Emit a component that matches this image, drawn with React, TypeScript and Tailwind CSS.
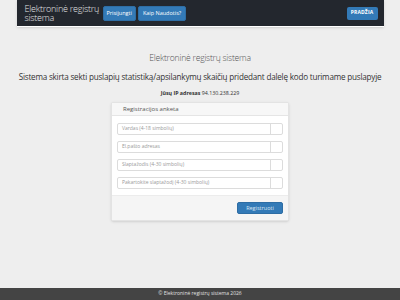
const fields = [
  "Vardas (4-18 simbolių)",
  "El.pašto adresas",
  "Slaptažodis (4-30 simbolių)",
  "Pakartokite slaptažodį (4-30 simbolių)",
];

const Navbar = () => {
  return (
    <header className="mx-auto w-[367px] h-[27px] bg-[#23272e] border-b border-white flex items-center pl-[8px] pr-[6px] shadow-sm">
      <div className="w-[77px] text-[9px] leading-[9px] text-[#e6e6e6] font-light tracking-tight">
        Elektroninė registrų sistema
      </div>
      <nav className="flex items-center gap-[2px] ml-[1px]">
        <button className="h-[15px] px-[3px] bg-[#337ab7] border border-[#2e6da4] rounded-[2px] text-[5.5px] text-white">
          Prisijungti
        </button>
        <button className="h-[15px] px-[4px] bg-[#337ab7] border border-[#2e6da4] rounded-[2px] text-[5.5px] text-white">
          Kaip Naudotis?
        </button>
      </nav>
      <button className="ml-auto h-[13px] w-[31px] bg-[#337ab7] rounded-[2px] text-[5px] font-bold text-white tracking-wide">
        PRADŽIA
      </button>
    </header>
  );
};

const App = () => {
  return (
    <div
      className="min-h-[300px] h-[300px] flex flex-col bg-[#eeeeee] text-[#333]"
      style={{ fontFamily: '"Open Sans", "Liberation Sans", sans-serif' }}
    >
      <Navbar />
      <main className="flex flex-col items-center">
        <h1 className="mt-[24px] text-[8.6px] leading-[14px] font-light text-[#555] tracking-tight whitespace-nowrap">
          Elektroninė registrų sistema
        </h1>
        <h2 className="mt-[5px] text-[8.1px] leading-[14px] text-[#333] tracking-tight whitespace-nowrap">
          Sistema skirta sekti puslapių statistiką/apsilankymų skaičių pridedant dalelę kodo turimame puslapyje
        </h2>
        <p className="mt-[5px] text-[5.3px] leading-[8px] text-[#333]">
          <span className="font-bold">Jūsų IP adresas</span> 94.130.238.229
        </p>
        <div className="mt-[5px] w-[178px] bg-white border border-[#e3e3e3] rounded-[2px] shadow-sm">
          <div className="h-[13px] px-[11px] flex items-center bg-[#f7f7f7] border-b border-[#e5e5e5] text-[6px] text-[#555]">
            Registracijos anketa
          </div>
          <div className="px-[5px] pt-[7px] pb-[6px] flex flex-col gap-[6px]">
            {fields.map((f) => (
              <div key={f} className="h-[12px] flex border border-[#dcdcdc] rounded-[2px] bg-white">
                <div className="flex-1 flex items-center px-[4px] text-[5px] text-[#999]">{f}</div>
                <div className="w-[12px] border-l border-[#dcdcdc]" />
              </div>
            ))}
          </div>
          <div className="h-[25px] bg-[#f5f5f5] border-t border-[#ececec] flex items-center justify-end px-[5px]">
            <button className="h-[12px] w-[46px] bg-[#337ab7] border border-[#2e6da4] rounded-[2px] text-[5.5px] text-[#dbe7f3]">
              Registruoti
            </button>
          </div>
        </div>
      </main>
      <footer className="mt-auto h-[12px] bg-[#444444] flex items-center justify-center text-[5px] text-[#e0e0e0]">
        © Elektroninė registrų sistema 2026
      </footer>
    </div>
  );
};

export default App;
